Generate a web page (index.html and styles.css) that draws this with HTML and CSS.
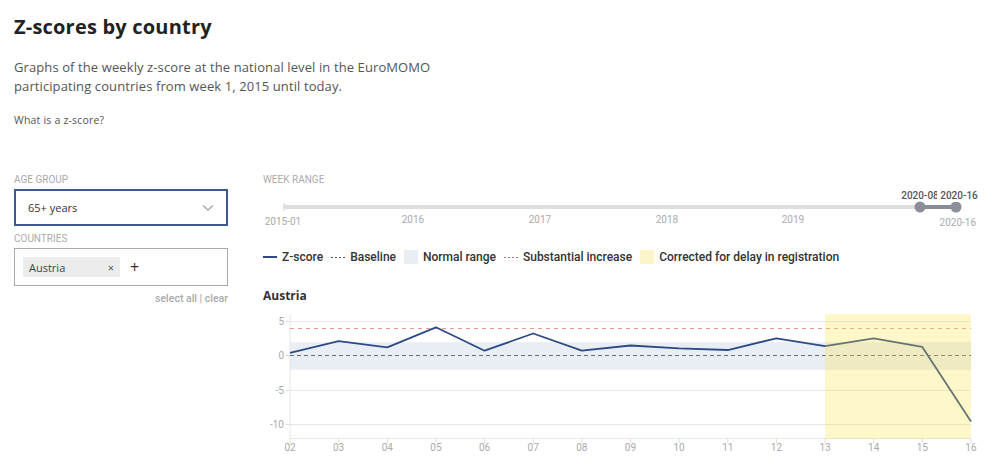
FILE: index.html
```html
<!DOCTYPE html>
<html lang="en">
<head>
    <meta charset="UTF-8">
    <meta name="viewport" content="width=device-width, initial-scale=1.0">
    <title>Z-scores by country</title>
    <link rel="stylesheet" href="styles.css">
</head>
<body>
    <h1 class="title">Z-scores by country</h1>
    <p class="intro">Graphs of the weekly z-score at the national level in the EuroMOMO participating countries from week 1, 2015 until today.</p>
    <a class="help" href="#">What is a z-score?</a>

    <div class="layout">
        <div class="filters">
            <div class="label">Age group</div>
            <div class="select">
                <span>65+ years</span>
                <svg class="chevron" width="12" height="8" viewBox="0 0 12 8">
                    <polyline points="1,1.5 6,6 11,1.5" fill="none" stroke="#aaa" stroke-width="1.4"/>
                </svg>
            </div>
            <div class="label">Countries</div>
            <div class="multi">
                <span class="tag">Austria <span class="tag-x">×</span></span>
                <span class="add">+</span>
            </div>
            <div class="links">select all | clear</div>
        </div>

        <div class="main">
            <div class="label">Week range</div>
            <svg class="range" width="737" height="46" viewBox="0 0 737 46">
                <rect x="21" y="20" width="672" height="4" rx="2" fill="#dedede"/>
                <line x1="21" y1="18" x2="21" y2="26" stroke="#ccc" stroke-width="1"/>
                <rect x="657" y="20" width="36" height="4" fill="#8a8d96"/>
                <circle cx="657" cy="22" r="5.5" fill="#8c8f99"/>
                <circle cx="693" cy="22" r="5.5" fill="#8c8f99"/>
                <g class="range-ticks">
                    <text x="20" y="40" text-anchor="middle">2015-01</text>
                    <text x="150" y="38" text-anchor="middle">2016</text>
                    <text x="277" y="38" text-anchor="middle">2017</text>
                    <text x="404" y="38" text-anchor="middle">2018</text>
                    <text x="530" y="38" text-anchor="middle">2019</text>
                    <text x="713" y="41" text-anchor="end">2020-16</text>
                </g>
                <g class="range-values">
                    <text x="657" y="14" text-anchor="middle">2020-08</text>
                    <rect x="674" y="3" width="44" height="14" fill="#fff"/>
                    <text x="696" y="14" text-anchor="middle">2020-16</text>
                </g>
            </svg>

            <div class="legend">
                <span class="item"><i class="key key-line"></i>Z-score</span>
                <span class="item"><i class="key key-dots"></i>Baseline</span>
                <span class="item"><i class="key key-box"></i>Normal range</span>
                <span class="item"><i class="key key-red"></i>Substantial increase</span>
                <span class="item"><i class="key key-yellow"></i>Corrected for delay in registration</span>
            </div>

            <h2 class="country">Austria</h2>
            <svg class="chart" width="737" height="150" viewBox="0 0 737 150">
                <!-- normal range -->
                <rect x="27" y="31.2" width="681" height="27.6" fill="#e9eef4"/>
                <!-- grid -->
                <g stroke="#e6e6e6" stroke-width="1">
                    <line x1="27" y1="10.5" x2="708" y2="10.5"/>
                    <line x1="27" y1="79.5" x2="708" y2="79.5"/>
                    <line x1="27" y1="113.5" x2="708" y2="113.5"/>
                    <line x1="27" y1="3" x2="27" y2="128"/>
                    <line x1="27" y1="127.5" x2="708" y2="127.5"/>
                </g>
                <g stroke="#ddd" stroke-width="1" id="ticks"></g>
                <line x1="27" y1="17.5" x2="708" y2="17.5" stroke="#eb9a9a" stroke-width="1" stroke-dasharray="4 4"/>
                <line x1="27" y1="44.5" x2="708" y2="44.5" stroke="#6d6d6d" stroke-width="1.2" stroke-dasharray="4 3"/>
                <polyline id="zline" fill="none" stroke="#2d4a87" stroke-width="1.8" stroke-linejoin="round"/>
                <!-- corrected for delay -->
                <rect x="562" y="3" width="146" height="125" fill="rgb(250,226,60)" fill-opacity="0.28"/>
                <g class="axis-y" text-anchor="end">
                    <text x="21" y="14">5</text>
                    <text x="21" y="48">0</text>
                    <text x="21" y="83">-5</text>
                    <text x="21" y="117">-10</text>
                </g>
                <g class="axis-x" text-anchor="middle" id="xlabels"></g>
            </svg>
        </div>
    </div>

    <script>
        const zscores = [0.4, 2.1, 1.2, 4.1, 0.7, 3.2, 0.7, 1.45, 1.05, 0.8, 2.5, 1.35, 2.5, 1.25, -9.6];
        const x = week => 27 + (week - 2) * 48.64;
        const y = value => 44.5 - 6.87 * value;

        const points = zscores.map((value, i) => `${x(i + 2).toFixed(1)},${y(value).toFixed(1)}`);
        document.getElementById('zline').setAttribute('points', points.join(' '));

        const svgNS = 'http://www.w3.org/2000/svg';
        const labels = document.getElementById('xlabels');
        const ticks = document.getElementById('ticks');

        for (let week = 2; week <= 16; week++) {
            const label = document.createElementNS(svgNS, 'text');
            label.setAttribute('x', x(week));
            label.setAttribute('y', 140);
            label.textContent = String(week).padStart(2, '0');
            labels.appendChild(label);

            const tick = document.createElementNS(svgNS, 'line');
            tick.setAttribute('x1', x(week));
            tick.setAttribute('x2', x(week));
            tick.setAttribute('y1', 128);
            tick.setAttribute('y2', 132);
            ticks.appendChild(tick);
        }

        [10.5, 44.5, 79.5, 113.5].forEach(pos => {
            const tick = document.createElementNS(svgNS, 'line');
            tick.setAttribute('x1', 23);
            tick.setAttribute('x2', 27);
            tick.setAttribute('y1', pos);
            tick.setAttribute('y2', pos);
            ticks.appendChild(tick);
        });
    </script>
</body>
</html>
```

FILE: styles.css
```css
body {
    font-family: "Open Sans", sans-serif;
    color: #333;
    margin: 0;
    padding: 0 14px;
    background: #fff;
}
.title {
    font-size: 20px;
    font-weight: 700;
    color: #222;
    margin: 14px 0 0;
    line-height: 26px;
    letter-spacing: 0.2px;
}
.intro {
    font-size: 13px;
    line-height: 19px;
    color: #555;
    width: 440px;
    margin: 18px 0 0;
    letter-spacing: 0.1px;
}
.help {
    display: block;
    font-size: 10.5px;
    letter-spacing: 0.2px;
    color: #555;
    text-decoration: none;
    margin-top: 17px;
}
.layout {
    display: flex;
    gap: 35px;
    margin-top: 46px;
}
.filters {
    width: 214px;
    flex-shrink: 0;
}
.main {
    flex: 1;
    margin-right: -14px;
}
.label {
    font-family: Roboto, sans-serif;
    font-size: 10px;
    text-transform: uppercase;
    color: #aaa;
    line-height: 14px;
}
.select {
    box-sizing: border-box;
    height: 37px;
    margin-top: 2px;
    border: 2px solid #3d5a8f;
    display: flex;
    align-items: center;
    justify-content: space-between;
    padding: 0 12px;
    font-size: 11px;
    color: #333;
}
.select + .label {
    margin-top: 6px;
}
.multi {
    box-sizing: border-box;
    height: 38px;
    margin-top: 2px;
    border: 1px solid #aaa;
    display: flex;
    align-items: center;
    gap: 10px;
    padding: 0 8px;
}
.tag {
    width: 97px;
    height: 20px;
    box-sizing: border-box;
    background: #ececec;
    display: flex;
    align-items: center;
    justify-content: space-between;
    padding: 0 6px;
    font-size: 11px;
    color: #444;
}
.tag-x {
    font-size: 11px;
    color: #555;
}
.add {
    font-size: 16px;
    color: #333;
    line-height: 1;
}
.links {
    text-align: right;
    font-family: Roboto, sans-serif;
    font-size: 10.5px;
    font-weight: 500;
    color: #aaa;
    margin-top: 6px;
}
.range {
    display: block;
    margin-top: -2px;
}
.range text {
    font-family: Roboto, sans-serif;
    font-size: 10px;
    fill: #aaa;
}
.range .range-values text {
    fill: #555;
    font-size: 10px;
    font-weight: 500;
}
.legend {
    display: flex;
    gap: 8px;
    margin-top: 19px;
    font-family: Roboto, sans-serif;
    font-size: 12px;
    font-weight: 500;
    color: #333;
}
.item {
    display: flex;
    align-items: center;
    gap: 5px;
}
.key {
    display: inline-block;
    width: 14px;
}
.key-line {
    height: 2px;
    background: #2d4a87;
}
.key-dots {
    height: 1px;
    background: repeating-linear-gradient(90deg, #555 0 2px, transparent 2px 4px);
}
.key-red {
    height: 1px;
    background: repeating-linear-gradient(90deg, #e06666 0 2px, transparent 2px 4px);
}
.key-box {
    height: 14px;
    background: #e9eef4;
}
.key-yellow {
    height: 14px;
    background: #fcf5c9;
}
.country {
    font-size: 12px;
    font-weight: 700;
    color: #333;
    margin: 24px 0 0;
    line-height: 16px;
}
.chart {
    display: block;
    margin-top: 7px;
}
.chart text {
    font-family: Roboto, sans-serif;
    font-size: 10px;
    fill: #aaa;
}
```
